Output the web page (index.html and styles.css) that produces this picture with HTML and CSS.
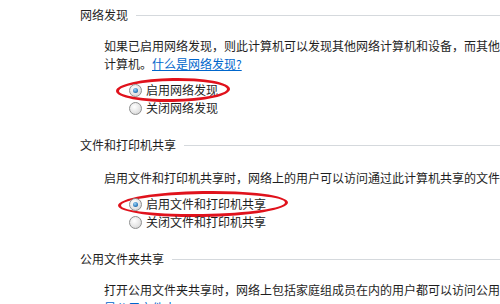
FILE: index.html
```html
<!DOCTYPE html>
<html lang="zh-CN">

<head>
    <meta charset="UTF-8">
    <title>高级共享设置</title>
    <link rel="stylesheet" href="styles.css">
</head>

<body>
    <div class="page">
        <div class="section">
            <div class="section-title"><span>网络发现</span><span class="rule"></span></div>
            <p class="desc">如果已启用网络发现，则此计算机可以发现其他网络计算机和设备，而其他网络计算机也可以发现此<br>计算机。<a href="#">什么是网络发现?</a></p>
            <div class="options">
                <label class="option marked mark-1"><span class="radio checked"></span>启用网络发现</label>
                <label class="option"><span class="radio"></span>关闭网络发现</label>
            </div>
        </div>

        <div class="section">
            <div class="section-title"><span>文件和打印机共享</span><span class="rule"></span></div>
            <p class="desc desc-single">启用文件和打印机共享时，网络上的用户可以访问通过此计算机共享的文件和打印机。</p>
            <div class="options">
                <label class="option marked mark-2"><span class="radio checked"></span>启用文件和打印机共享</label>
                <label class="option"><span class="radio"></span>关闭文件和打印机共享</label>
            </div>
        </div>

        <div class="section">
            <div class="section-title"><span>公用文件夹共享</span><span class="rule"></span></div>
            <p class="desc">打开公用文件夹共享时，网络上包括家庭组成员在内的用户都可以访问公用文件夹中的文件。什么<br><a href="#">是公用文件夹?</a></p>
        </div>
    </div>
</body>

</html>
```

FILE: styles.css
```css
body {
    margin: 0;
    background: #fff;
    font-family: "Microsoft YaHei", "Noto Sans CJK SC", sans-serif;
    font-size: 12px;
    color: #1e1e1e;
    overflow: hidden;
}

.page {
    width: 500px;
    height: 304px;
    overflow: hidden;
    padding: 6px 0 0 80px;
    box-sizing: border-box;
}

.section {
    margin-bottom: 19px;
}

.section-title {
    display: flex;
    align-items: center;
    gap: 8px;
    line-height: 18px;
    white-space: nowrap;
}

.section-title .rule {
    flex: 1;
    height: 1px;
    margin-right: -80px;
    background: #d5d9dd;
}

.desc {
    margin: 13px 0 0 24px;
    line-height: 18px;
    white-space: nowrap;
}

.desc-single {
    margin-top: 15px;
}

.desc a {
    color: #0066cc;
    text-decoration: underline;
}

.options {
    margin: 8px 0 0 49px;
    display: flex;
    flex-direction: column;
}

.option {
    position: relative;
    display: flex;
    align-items: center;
    gap: 4px;
    height: 18px;
    line-height: 18px;
    white-space: nowrap;
}

.radio {
    width: 11px;
    height: 11px;
    border-radius: 50%;
    border: 1px solid #8e8f8f;
    background: radial-gradient(circle at 40% 35%, #ffffff 0%, #e6e6e6 55%, #c9c9c9 100%);
    box-sizing: content-box;
    position: relative;
    flex-shrink: 0;
}

.radio.checked::after {
    content: "";
    position: absolute;
    left: 3px;
    top: 3px;
    width: 5px;
    height: 5px;
    border-radius: 50%;
    background: radial-gradient(circle at 40% 35%, #9fd4f5 0%, #2f7fc0 60%, #0d3f75 100%);
}

.marked::before {
    content: "";
    position: absolute;
    border: 3px solid #e0121c;
    border-radius: 50%;
    box-sizing: border-box;
}

.mark-1::before {
    left: -13px;
    top: -3px;
    width: 114px;
    height: 24px;
    transform: rotate(-1deg);
}

.mark-2::before {
    left: -11px;
    top: -4px;
    width: 170px;
    height: 26px;
    transform: rotate(-1deg);
}
```
